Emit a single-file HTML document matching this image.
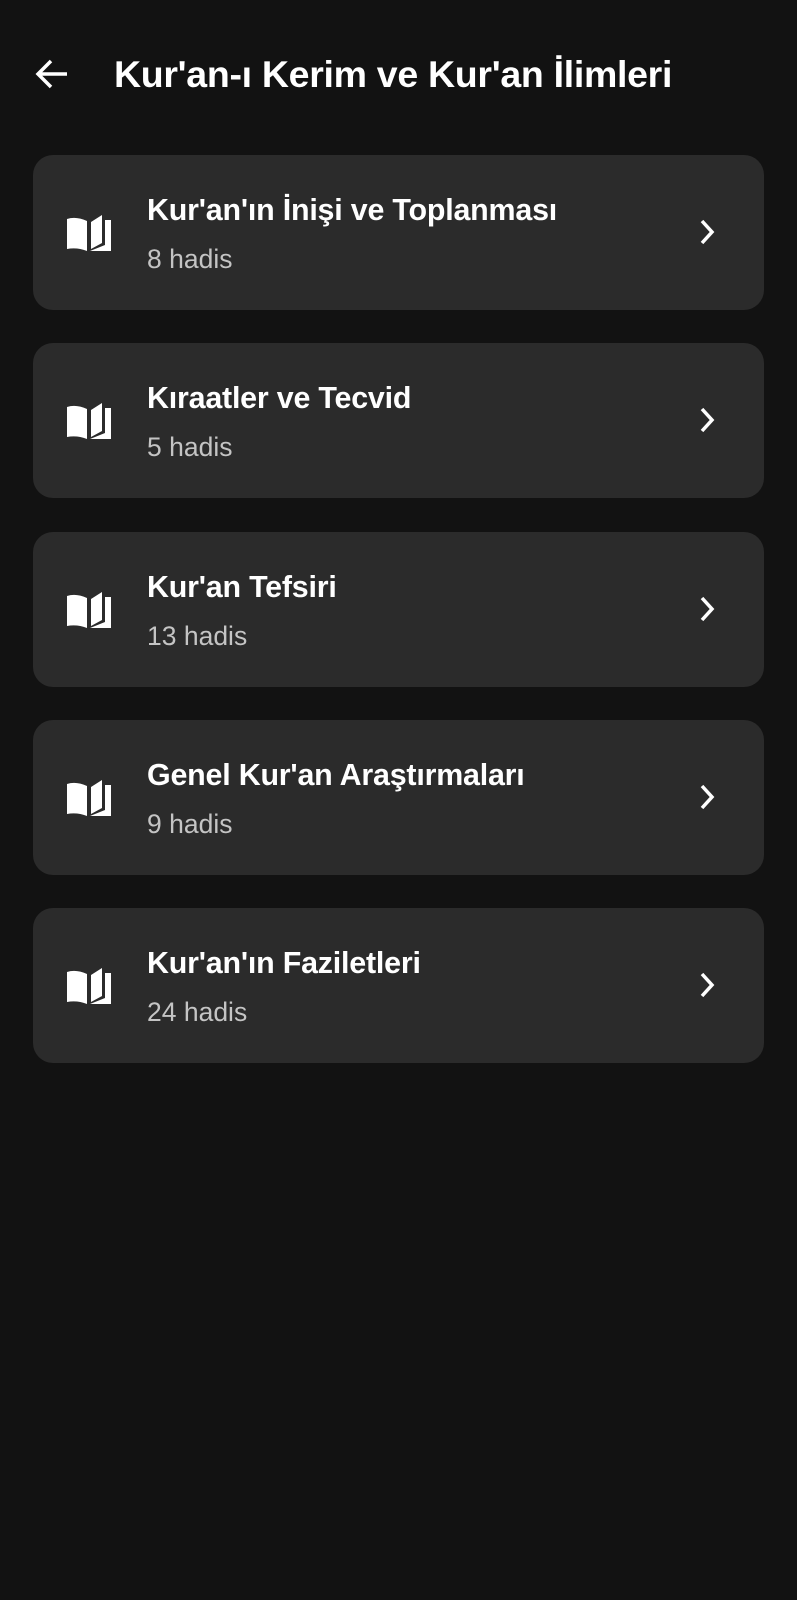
<!DOCTYPE html>
<html><head><meta charset="utf-8"><style>
body{margin:0;width:797px;height:1600px;background:#121212;font-family:"Liberation Sans",sans-serif;color:#fff;overflow:hidden;position:relative}
.hdr{position:absolute;left:114px;top:53px;font-size:37.5px;font-weight:bold;letter-spacing:-0.3px}
.back{position:absolute;left:34px;top:57px}
.card{position:absolute;left:33px;width:731px;height:155px;background:#2b2b2b;border-radius:20px}
.card .t{position:absolute;left:114px;top:38px;font-size:30.4px;font-weight:bold;letter-spacing:-0.2px}
.card .s{position:absolute;left:114px;top:89px;font-size:26.5px;color:#c4c4c4}
.card svg.i{position:absolute;left:33px;top:59px}
.card svg.c{position:absolute;left:664px;top:62px}
</style></head><body>
<svg class="back" width="36" height="34" viewBox="0 0 36 34"><path d="M33 17H5M17 4L4 17l13 13" stroke="#fff" stroke-width="3.5" fill="none"/></svg>
<div class="hdr">Kur'an-ı Kerim ve Kur'an İlimleri</div>

<div class="card" style="top:155px"><svg class="i" width="46" height="38" viewBox="0 0 46 38"><path d="M1 5Q10 2 21 7V37Q11 33 1 35Z M25 8L36 1V29L25 35Z M39 6H45V37H24L39 31Z" fill="#fff"/></svg><div class="t">Kur'an'ın İnişi ve Toplanması</div><div class="s">8 hadis</div><svg class="c" width="20" height="30" viewBox="0 0 20 30"><path d="M5 4l10 11-10 11" stroke="#fff" stroke-width="3.5" fill="none"/></svg></div>

<div class="card" style="top:343px"><svg class="i" width="46" height="38" viewBox="0 0 46 38"><path d="M1 5Q10 2 21 7V37Q11 33 1 35Z M25 8L36 1V29L25 35Z M39 6H45V37H24L39 31Z" fill="#fff"/></svg><div class="t">Kıraatler ve Tecvid</div><div class="s">5 hadis</div><svg class="c" width="20" height="30" viewBox="0 0 20 30"><path d="M5 4l10 11-10 11" stroke="#fff" stroke-width="3.5" fill="none"/></svg></div>

<div class="card" style="top:532px"><svg class="i" width="46" height="38" viewBox="0 0 46 38"><path d="M1 5Q10 2 21 7V37Q11 33 1 35Z M25 8L36 1V29L25 35Z M39 6H45V37H24L39 31Z" fill="#fff"/></svg><div class="t">Kur'an Tefsiri</div><div class="s">13 hadis</div><svg class="c" width="20" height="30" viewBox="0 0 20 30"><path d="M5 4l10 11-10 11" stroke="#fff" stroke-width="3.5" fill="none"/></svg></div>

<div class="card" style="top:720px"><svg class="i" width="46" height="38" viewBox="0 0 46 38"><path d="M1 5Q10 2 21 7V37Q11 33 1 35Z M25 8L36 1V29L25 35Z M39 6H45V37H24L39 31Z" fill="#fff"/></svg><div class="t">Genel Kur'an Araştırmaları</div><div class="s">9 hadis</div><svg class="c" width="20" height="30" viewBox="0 0 20 30"><path d="M5 4l10 11-10 11" stroke="#fff" stroke-width="3.5" fill="none"/></svg></div>

<div class="card" style="top:908px"><svg class="i" width="46" height="38" viewBox="0 0 46 38"><path d="M1 5Q10 2 21 7V37Q11 33 1 35Z M25 8L36 1V29L25 35Z M39 6H45V37H24L39 31Z" fill="#fff"/></svg><div class="t">Kur'an'ın Faziletleri</div><div class="s">24 hadis</div><svg class="c" width="20" height="30" viewBox="0 0 20 30"><path d="M5 4l10 11-10 11" stroke="#fff" stroke-width="3.5" fill="none"/></svg></div>
</body></html>
